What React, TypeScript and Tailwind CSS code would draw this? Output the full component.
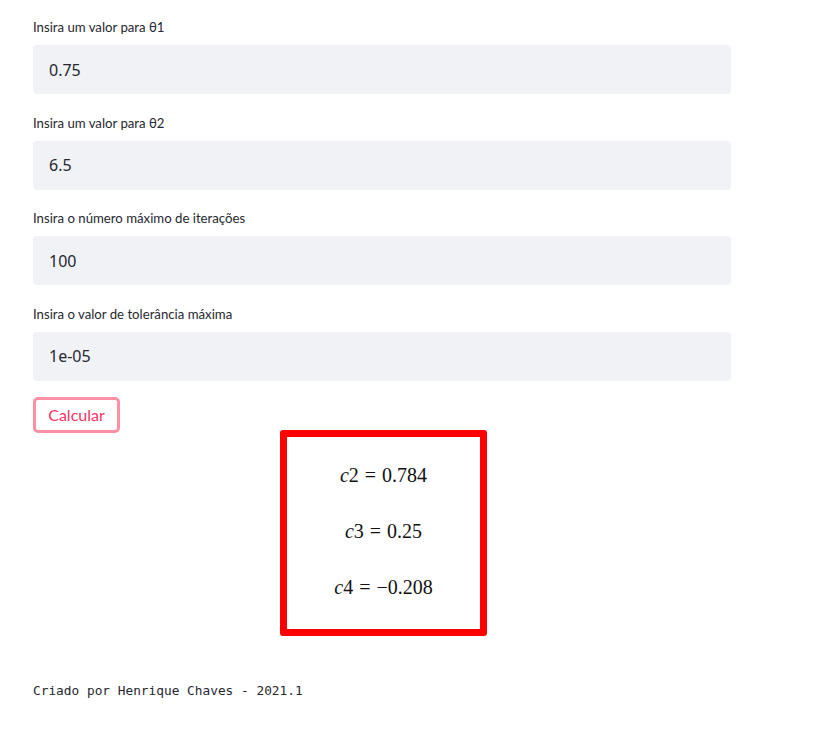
import React from "react";

const fields = [
  { label: "Insira um valor para θ1", value: "0.75" },
  { label: "Insira um valor para θ2", value: "6.5" },
  { label: "Insira o número máximo de iterações", value: "100" },
  { label: "Insira o valor de tolerância máxima", value: "1e-05" },
];

function Eq({ v, n }: { v: string; n: string }) {
  return (
    <div className="text-[20px] leading-[20px] h-[20px] text-[#111]" style={{ fontFamily: '"Liberation Serif", "DejaVu Serif", serif' }}>
      <span className="italic">c</span>
      <span>{v}</span>
      <span className="mx-[6px]">=</span>
      <span>{n}</span>
    </div>
  );
}

export default function App() {
  return (
    <div className="min-h-[745px] w-[833px] bg-white" style={{ fontFamily: 'Lato, "Noto Sans", sans-serif' }}>
      <div className="w-[698px] ml-[33px] pt-[19px]">
        <div className="flex flex-col gap-[20.67px] mb-[16px]">
          {fields.map((f) => (
            <div key={f.label}>
              <div className="text-[13.2px] leading-[16px] text-[#262730] h-[26px]">{f.label}</div>
              <div className="h-[49px] rounded-[4px] bg-[#f0f2f6] flex items-center px-[16px] text-[16px] text-[#262730]" style={{ fontFamily: '"Noto Sans", sans-serif' }}>
                {f.value}
              </div>
            </div>
          ))}
        </div>
        <button className="h-[36px] w-[87px] rounded-[5px] border-[3px] border-[#ff8fa3] bg-white text-[#f63366] text-[16px] leading-none" style={{ fontFamily: 'Lato, "Noto Sans", sans-serif' }}>
          Calcular
        </button>
      </div>
      <div className="ml-[280px] mt-[-3px] w-[207px] h-[206px] border-[7px] border-[#ff0000] rounded-[3px] flex flex-col items-center pt-[28px] gap-[36px]">
        <Eq v="2" n="0.784" />
        <Eq v="3" n="0.25" />
        <Eq v="4" n="−0.208" />
      </div>
      <div className="ml-[33px] mt-[45px] text-[12.8px] text-[#262730]" style={{ fontFamily: '"DejaVu Sans Mono", "Liberation Mono", monospace' }}>
        Criado por Henrique Chaves - 2021.1
      </div>
    </div>
  );
}
